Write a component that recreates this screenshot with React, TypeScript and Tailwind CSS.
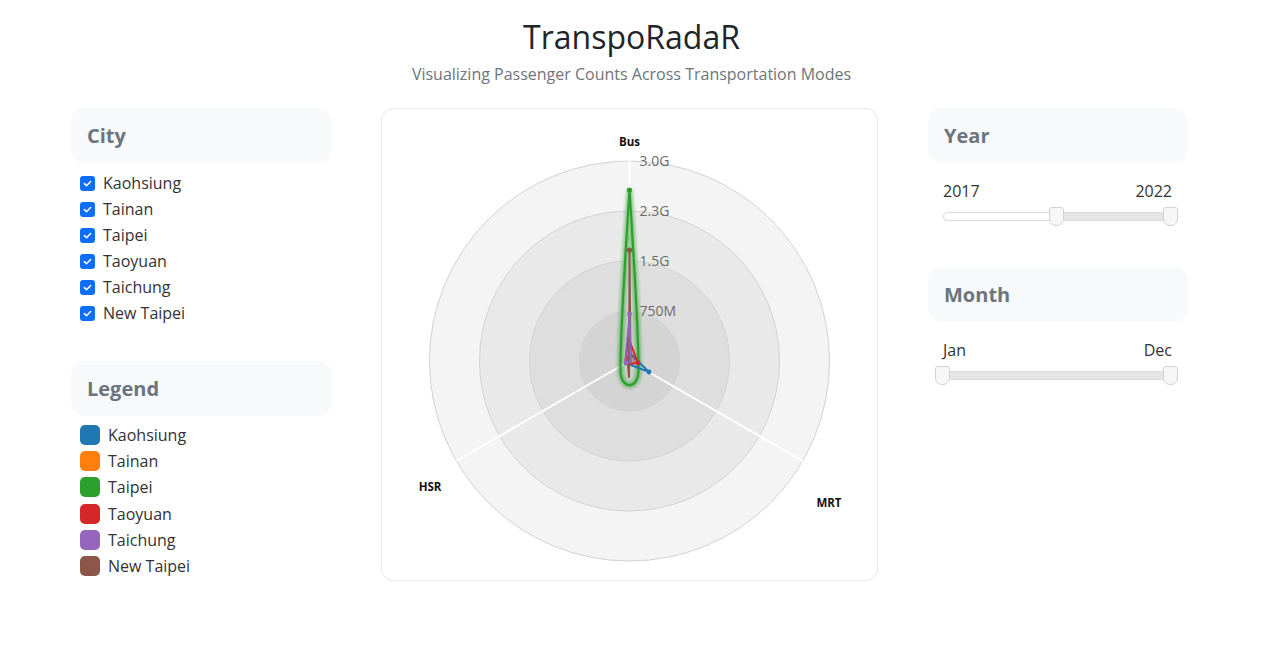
import React from "react";

const cities = ["Kaohsiung", "Tainan", "Taipei", "Taoyuan", "Taichung", "New Taipei"];

const legend = [
  { name: "Kaohsiung", color: "bg-[#1f77b4]" },
  { name: "Tainan", color: "bg-[#ff7f0e]" },
  { name: "Taipei", color: "bg-[#2ca02c]" },
  { name: "Taoyuan", color: "bg-[#d62728]" },
  { name: "Taichung", color: "bg-[#9467bd]" },
  { name: "New Taipei", color: "bg-[#8c564b]" },
];

function CardHeader({ title }: { title: string }) {
  return (
    <div className="h-[55px] rounded-[14px] bg-[#f8f9fa] pl-4 flex items-center">
      <h2 className="text-[20px] font-bold text-[#6c757d]">{title}</h2>
    </div>
  );
}

function RangeSlider({ left, right, from, to }: { left: string; right: string; from: number; to: number }) {
  // from / to are handle positions in px inside the 235px track
  return (
    <div className="ml-[15px] w-[235px]">
      <div className="flex justify-between pr-[6px] text-[16px] leading-[22px] text-[#333]">
        <span>{left}</span>
        <span>{right}</span>
      </div>
      <div className="relative mt-[5px] h-[20px]">
        <div className="absolute left-0 right-0 top-[5px] h-[9px] rounded-[4px] border border-[#dcdcdc] bg-white" />
        <div
          className="absolute top-[5px] h-[9px] border-y border-[#dcdcdc] bg-[#e6e6e6]"
          style={{ left: from + 7, width: to - from }}
        />
        <div
          className="absolute top-0 h-[19px] w-[15px] rounded-t-[3px] rounded-b-[7px] border border-[#d3d3d3] bg-[#f7f7f7]"
          style={{ left: from }}
        />
        <div
          className="absolute top-0 h-[19px] w-[15px] rounded-t-[3px] rounded-b-[7px] border border-[#d3d3d3] bg-[#f7f7f7]"
          style={{ left: to }}
        />
      </div>
    </div>
  );
}

function Radar() {
  const cx = 247.5;
  const cy = 252;
  const ticks = [
    { r: 50, label: "750M" },
    { r: 100, label: "1.5G" },
    { r: 150, label: "2.3G" },
    { r: 200, label: "3.0G" },
  ];
  const hsr = { x: cx - 200 * Math.cos(Math.PI / 6), y: cy + 100 };
  const mrt = { x: cx + 200 * Math.cos(Math.PI / 6), y: cy + 100 };

  return (
    <svg viewBox="0 0 495 471" className="block h-full w-full">
      <defs>
        <filter id="glow" x="-50%" y="-10%" width="200%" height="120%">
          <feGaussianBlur stdDeviation="1.8" />
        </filter>
      </defs>

      {/* rings, stacked from outside in */}
      {[...ticks].reverse().map((t) => (
        <circle key={t.r} cx={cx} cy={cy} r={t.r} fill="rgba(0,0,0,0.042)" stroke="#d2d2d2" strokeWidth="1" />
      ))}

      {/* angular axes */}
      <g stroke="#ffffff" strokeWidth="2">
        <line x1={cx} y1={cy} x2={cx} y2={cy - 212} />
        <line x1={cx} y1={cy} x2={hsr.x} y2={hsr.y} />
        <line x1={cx} y1={cy} x2={mrt.x} y2={mrt.y} />
      </g>

      {/* tick labels */}
      <g fontSize="14" fill="#6b6b6b" fontFamily="'Open Sans', sans-serif">
        {ticks.map((t) => (
          <text key={t.label} x={cx + 10} y={cy - t.r + 5}>
            {t.label}
          </text>
        ))}
      </g>

      {/* axis labels */}
      <g fontSize="11.5" fontWeight="700" fill="#111" fontFamily="'Open Sans', sans-serif" textAnchor="middle">
        <text x={cx} y={37}>Bus</text>
        <text x={48} y={382}>HSR</text>
        <text x={447} y={398}>MRT</text>
      </g>

      {/* Taipei glow + shape */}
      <path
        d="M247.5,81 C250,120 257,235 256.5,262 C256,281 239,281 238.5,262 C238,235 245,120 247.5,81 Z"
        fill="none"
        stroke="#2ca02c"
        strokeOpacity="0.5"
        strokeWidth="6"
        filter="url(#glow)"
      />
      <path
        d="M247.5,81 C250,120 257,235 256.5,262 C256,281 239,281 238.5,262 C238,235 245,120 247.5,81 Z"
        fill="rgba(44,160,44,0.08)"
        stroke="#2ca02c"
        strokeWidth="2.2"
      />
      <circle cx={247.5} cy={81} r={2.6} fill="#2ca02c" />

      {/* Kaohsiung */}
      <path d="M247.5,244 L267,263 L244,254 Z" fill="rgba(31,119,180,0.15)" stroke="#1f77b4" strokeWidth="2" strokeLinejoin="round" />
      <circle cx={267} cy={263} r={2.4} fill="#1f77b4" />

      {/* Taoyuan */}
      <path d="M246.5,229 L256,254 L243,255 Z" fill="rgba(214,39,40,0.35)" stroke="#d62728" strokeWidth="2" strokeLinejoin="round" />
      <circle cx={256} cy={254} r={2.4} fill="#d62728" />

      {/* New Taipei */}
      <path d="M247.5,141 L248.5,254 L246,256 L247,268 Z" fill="none" stroke="#8c564b" strokeWidth="2" strokeLinejoin="round" />
      <circle cx={247.5} cy={141} r={2.6} fill="#8c564b" />

      {/* Taichung */}
      <path d="M247.5,205 L249,253 L243,253 Z" fill="rgba(148,103,189,0.3)" stroke="#9467bd" strokeWidth="1.6" strokeLinejoin="round" />
      <circle cx={247.5} cy={205} r={2.4} fill="#9467bd" />
      <circle cx={244} cy={254} r={2.4} fill="#9467bd" />
    </svg>
  );
}

export default function App() {
  return (
    <div className="min-h-screen bg-white font-['Open_Sans',sans-serif] text-[#212529]">
      {/* Title */}
      <header className="pt-[17px] text-center">
        <h1 className="text-[32px] leading-[40px]">TranspoRadaR</h1>
        <p className="mt-[6px] text-[16px] leading-[22px] text-[#6c757d]">
          Visualizing Passenger Counts Across Transportation Modes
        </p>
      </header>

      <main className="mt-[23px] flex items-start gap-[49px] pl-[71px]">
        {/* Left column */}
        <div className="w-[261px]">
          <CardHeader title="City" />
          <ul className="mt-[7px] pl-[9px]">
            {cities.map((c) => (
              <li key={c} className="flex h-[26px] items-center gap-[8px] text-[16px] text-[#333]">
                <span className="flex h-[15px] w-[15px] items-center justify-center rounded-[3px] bg-[#0d6efd]">
                  <svg viewBox="0 0 16 16" className="h-[11px] w-[11px]">
                    <path d="M3.5 8.2 L6.6 11.2 L12.5 5" fill="none" stroke="#fff" strokeWidth="2.2" strokeLinecap="round" strokeLinejoin="round" />
                  </svg>
                </span>
                {c}
              </li>
            ))}
          </ul>

          <div className="mt-[35px]">
            <CardHeader title="Legend" />
          </div>
          <ul className="mt-[6px] pl-[9px]">
            {legend.map((l) => (
              <li key={l.name} className="flex h-[26.2px] items-center gap-[8px] text-[16px] text-[#333]">
                <span className={`h-[20px] w-[20px] rounded-[5px] ${l.color}`} />
                {l.name}
              </li>
            ))}
          </ul>
        </div>

        {/* Chart */}
        <div className="h-[473px] w-[497px] rounded-[12px] border border-[#e6e6e6] bg-white">
          <Radar />
        </div>

        {/* Right column */}
        <div className="ml-[1px] w-[260px]">
          <CardHeader title="Year" />
          <div className="mt-[17px]">
            <RangeSlider left="2017" right="2022" from={106} to={220} />
          </div>

          <div className="mt-[40px]">
            <CardHeader title="Month" />
          </div>
          <div className="mt-[17px]">
            <RangeSlider left="Jan" right="Dec" from={-8} to={220} />
          </div>
        </div>
      </main>
    </div>
  );
}
